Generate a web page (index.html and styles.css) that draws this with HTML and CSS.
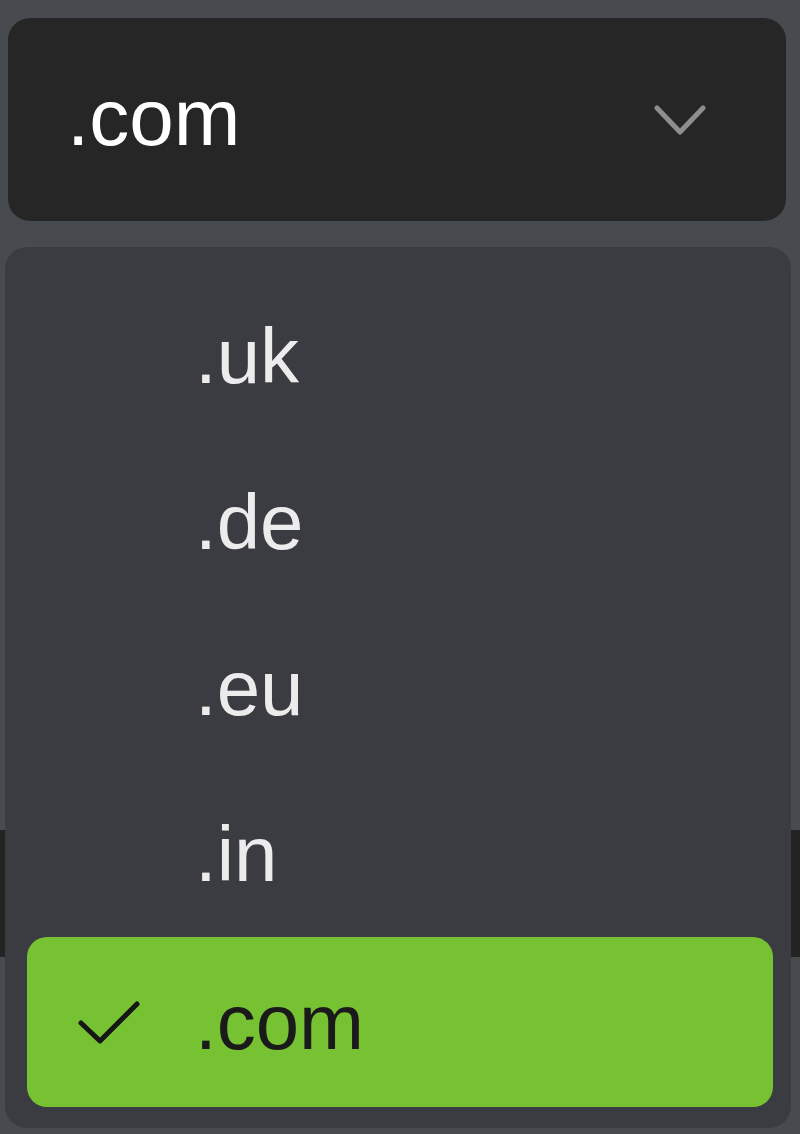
FILE: index.html
```html
<!DOCTYPE html>
<html lang="en">
<head>
<meta charset="utf-8">
<title>Domain select</title>
<link rel="stylesheet" href="styles.css">
</head>
<body>
<div class="page">
  <div class="select">
    <span class="select-value">.com</span>
    <svg class="chevron" width="52" height="30" viewBox="0 0 52 30" aria-hidden="true">
      <polyline points="3,3 26,27 49,3" fill="none" stroke="#8e8e8e" stroke-width="5" stroke-linecap="round" stroke-linejoin="round"/>
    </svg>
  </div>
  <div class="field-behind"></div>

  <ul class="menu">
    <li class="option"><span class="check-slot"></span><span class="label">.uk</span></li>
    <li class="option"><span class="check-slot"></span><span class="label">.de</span></li>
    <li class="option"><span class="check-slot"></span><span class="label">.eu</span></li>
    <li class="option"><span class="check-slot"></span><span class="label">.in</span></li>
    <li class="option selected">
      <span class="check-slot">
        <svg class="check" width="64" height="46" viewBox="0 0 64 46" aria-hidden="true">
          <polyline points="4,24 23,42 60,5" fill="none" stroke="#161616" stroke-width="5" stroke-linecap="round" stroke-linejoin="round"/>
        </svg>
      </span>
      <span class="label">.com</span>
    </li>
  </ul>
</div>
</body>
</html>
```

FILE: styles.css
```css
html, body {
  margin: 0;
  padding: 0;
}

body {
  background: #474a4e;
  font-family: "Liberation Sans", Arial, sans-serif;
  width: 800px;
  height: 1134px;
  overflow: hidden;
}

.page {
  position: relative;
  width: 800px;
  height: 1134px;
  padding-top: 18px;
  box-sizing: border-box;
}

.select {
  margin-left: 8px;
  width: 778px;
  height: 203px;
  box-sizing: border-box;
  background: #262626;
  border-radius: 22px;
  display: flex;
  align-items: center;
  justify-content: space-between;
  padding-left: 59px;
  padding-right: 80px;
}

.select-value {
  color: #ffffff;
  font-size: 80px;
  line-height: 1;
  margin-top: -4px;
}

.chevron {
  display: block;
}

.field-behind {
  margin-top: 609px;
  height: 127px;
  background: #232323;
}

.menu {
  position: absolute;
  top: 247px;
  left: 5px;
  width: 786px;
  height: 881px;
  box-sizing: border-box;
  margin: 0;
  padding: 26px 18px 0 22px;
  list-style: none;
  background: #3b3c41;
  border-radius: 22px;
}

.option {
  height: 166px;
  display: flex;
  align-items: center;
  padding-left: 50px;
  border-radius: 20px;
  color: #ececec;
  font-size: 78px;
}

.option.selected {
  height: 170px;
  background: #77c232;
  color: #1a1a1a;
}

.check-slot {
  width: 118px;
  flex: none;
  display: flex;
  align-items: center;
}

.check {
  display: block;
}

.label {
  line-height: 1;
}
```
